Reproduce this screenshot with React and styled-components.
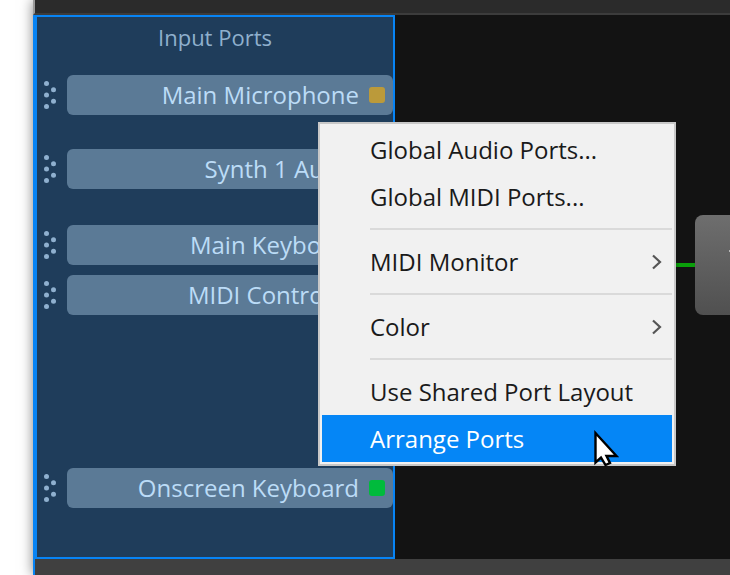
import React from "react";
import styled, { createGlobalStyle } from "styled-components";

const GlobalStyle = createGlobalStyle`
  html, body {
    margin: 0;
    padding: 0;
    background: #fff;
    overflow: hidden;
  }
`;

const Page = styled.div`
  position: relative;
  width: 730px;
  height: 575px;
  padding-left: 33px;
  box-sizing: border-box;
  overflow: hidden;
  font-family: "Open Sans", sans-serif;
  background: #fff;
`;

const Editor = styled.div`
  width: 697px;
  height: 575px;
  box-sizing: border-box;
  display: flex;
  flex-direction: column;
  background: #131313;
  border-left: 2px solid #0784f5;
  box-shadow: 0 0 12px rgba(0, 0, 0, 0.5);
`;

const TopBar = styled.div`
  height: 13px;
  flex: none;
  margin-left: -2px;
  background: #2b2b2b;
  border-left: 2px solid #9a9a9a;
  border-bottom: 2px solid #3c3c3c;
`;

const Canvas = styled.div`
  flex: 1;
  display: flex;
  min-height: 0;
`;

const BottomBar = styled.div`
  height: 16px;
  flex: none;
  background: #404040;
`;

const PortsPanel = styled.section`
  width: 360px;
  box-sizing: border-box;
  background: #1f3d5b;
  border: 2px solid #0784f5;
  display: flex;
  flex-direction: column;
`;

const PanelTitle = styled.div`
  height: 42px;
  line-height: 40px;
  text-align: center;
  font-size: 22px;
  color: #8fb0cd;
`;

const PortRow = styled.div`
  display: flex;
  align-items: center;
  margin-top: ${(props) => props.$top}px;
  height: 40px;
`;

const Grip = styled.svg`
  width: 13px;
  height: 28px;
  margin-left: 7px;
  margin-right: 10px;
  flex: none;
`;

const PortPill = styled.div`
  flex: 1;
  height: 40px;
  box-sizing: border-box;
  display: flex;
  align-items: center;
  justify-content: flex-end;
  gap: 10px;
  padding-right: 8px;
  border-radius: 6px;
  background: #5b7a96;
  color: #bcdcf7;
  font-size: 24px;
  white-space: nowrap;
`;

const PortLabel = styled.span`
  margin-bottom: 2px;
`;

const PortDot = styled.span`
  width: 16px;
  height: 16px;
  border-radius: 3px;
  flex: none;
  background: ${(props) => props.$color};
`;

const Node = styled.div`
  position: absolute;
  left: 695px;
  top: 215px;
  width: 60px;
  height: 100px;
  border-radius: 8px;
  background: linear-gradient(#6e6e6e, #505050);
`;

const NodeTick = styled.span`
  position: absolute;
  left: 34px;
  top: 35px;
  width: 4px;
  height: 2px;
  background: #b8b8b8;
`;

const Wire = styled.div`
  position: absolute;
  left: 676px;
  top: 263px;
  width: 19px;
  height: 4px;
  background: linear-gradient(90deg, #078307, #0a9f0a 20%);
`;

const Menu = styled.div`
  position: absolute;
  left: 318px;
  top: 122px;
  width: 358px;
  height: 344px;
  box-sizing: border-box;
  padding: 2px;
  background: #f1f1f1;
  border: 2px solid #c8c8c8;
  display: flex;
  flex-direction: column;
`;

const MenuItem = styled.div`
  height: 47px;
  flex: none;
  display: flex;
  align-items: center;
  justify-content: space-between;
  padding: 0 9px 0 48px;
  font-size: 24px;
  color: ${(props) => (props.$active ? "#fff" : "#1a1a1a")};
  background: ${(props) => (props.$active ? "#0586f6" : "transparent")};
  white-space: nowrap;
`;

const MenuSep = styled.div`
  height: 2px;
  flex: none;
  margin: 8px 0 8px 48px;
  background: #dadada;
`;

const Cursor = styled.svg`
  position: absolute;
  left: 593px;
  top: 429px;
  width: 28px;
  height: 40px;
`;

const ports = [
  { name: "Main Microphone", top: 16, color: "#bb9a3a" },
  { name: "Synth 1 Audio", top: 34, color: "#bb9a3a" },
  { name: "Main Keyboard", top: 36, color: "#00bb3c" },
  { name: "MIDI Controller", top: 10, color: "#00bb3c" },
  { name: "Onscreen Keyboard", top: 153, color: "#00bb3c" },
];

const GripIcon = () => (
  <Grip viewBox="0 0 13 28">
    {[[2.5, 2.5], [2.5, 14], [2.5, 25.5], [9.5, 8.8], [9.5, 20.2]].map(([cx, cy]) => (
      <circle key={`${cx}-${cy}`} cx={cx} cy={cy} r="2.5" fill="#8fb0cf" />
    ))}
  </Grip>
);

const Chevron = () => (
  <svg width="12" height="16" viewBox="0 0 12 16" fill="none">
    <path d="M2 1.5 L9 8 L2 14.5" stroke="#555" strokeWidth="2.2" />
  </svg>
);

export default function App() {
  return (
    <Page>
      <GlobalStyle />
      <Editor>
        <TopBar />
        <Canvas>
          <PortsPanel>
            <PanelTitle>Input Ports</PanelTitle>
            {ports.map((port) => (
              <PortRow key={port.name} $top={port.top}>
                <GripIcon />
                <PortPill>
                  <PortLabel>{port.name}</PortLabel>
                  <PortDot $color={port.color} />
                </PortPill>
              </PortRow>
            ))}
          </PortsPanel>
        </Canvas>
        <BottomBar />
      </Editor>
      <Wire />
      <Node>
        <NodeTick />
      </Node>
      <Menu>
        <MenuItem>Global Audio Ports...</MenuItem>
        <MenuItem>Global MIDI Ports...</MenuItem>
        <MenuSep />
        <MenuItem>
          MIDI Monitor <Chevron />
        </MenuItem>
        <MenuSep />
        <MenuItem>
          Color <Chevron />
        </MenuItem>
        <MenuSep />
        <MenuItem>Use Shared Port Layout</MenuItem>
        <MenuItem $active>Arrange Ports</MenuItem>
      </Menu>
      <Cursor viewBox="0 0 28 40">
        <path
          d="M2.5 4 L2.5 33.5 L8 28.5 L12.5 36 L17 34 L13.5 27 L23.5 27 Z"
          fill="#fff"
          stroke="#000"
          strokeWidth="2.4"
          strokeLinejoin="miter"
        />
      </Cursor>
    </Page>
  );
}
